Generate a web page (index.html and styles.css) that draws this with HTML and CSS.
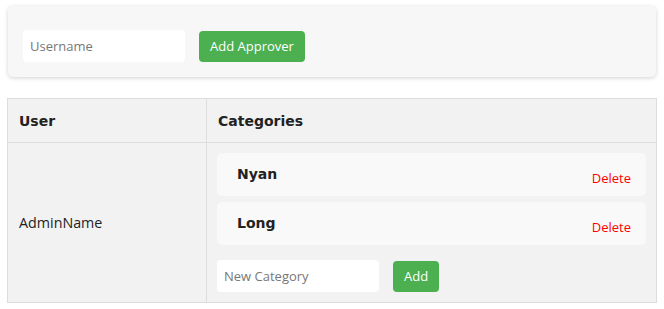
FILE: index.html
```html
<!DOCTYPE html>
<html>
<head>
<meta charset="utf-8">
<link rel="stylesheet" href="styles.css">
</head>
<body>
<div class="page">
  <div class="card">
    <form class="approver-form">
      <input class="text-input" type="text" placeholder="Username">
      <button class="btn" type="button">Add Approver</button>
    </form>
  </div>
  <table class="approvers">
    <thead>
      <tr>
        <th class="col-user">User</th>
        <th>Categories</th>
      </tr>
    </thead>
    <tbody>
      <tr>
        <td class="user-cell">AdminName</td>
        <td class="cat-cell">
          <div class="cat-list">
            <div class="cat-item"><span class="cat-name">Nyan</span><a class="delete">Delete</a></div>
            <div class="cat-item"><span class="cat-name">Long</span><a class="delete">Delete</a></div>
          </div>
          <div class="cat-form">
            <input class="text-input" type="text" placeholder="New Category">
            <button class="btn" type="button">Add</button>
          </div>
        </td>
      </tr>
    </tbody>
  </table>
</div>
</body>
</html>
```
FILE: styles.css
```css
html, body {
  margin: 0;
  padding: 0;
  background: #fff;
}
.page {
  padding: 6px 7px 0;
  font-family: "Open Sans", sans-serif;
  color: #222;
}
.card {
  margin: 0 1px;
  background: #f7f7f7;
  border-radius: 5px;
  box-shadow: 0 1px 4px rgba(0,0,0,0.18);
  padding: 24px 15px 15px;
}
.approver-form, .cat-form {
  display: flex;
  align-items: center;
  gap: 14px;
}
.text-input {
  box-sizing: border-box;
  width: 162px;
  height: 32px;
  border: none;
  border-radius: 4px;
  background: #fff;
  padding: 0 7px;
  font-family: "Open Sans", sans-serif;
  font-size: 13px;
  color: #333;
  outline: none;
}
.text-input::placeholder {
  color: #777;
}
.btn {
  box-sizing: border-box;
  height: 31px;
  border: none;
  border-radius: 4px;
  background: #4caf50;
  color: #fff;
  padding: 0 11px;
  font-family: "Open Sans", sans-serif;
  font-size: 13px;
}
.approvers {
  margin-top: 21px;
  width: 100%;
  border-collapse: collapse;
  background: #f2f2f2;
}
.approvers th, .approvers td {
  border: 1px solid #ddd;
  text-align: left;
}
.approvers th {
  font-family: "DejaVu Sans", sans-serif;
  font-weight: bold;
  font-size: 14px;
  height: 44px;
  padding: 0 11px;
  box-sizing: border-box;
  color: #222;
}
.col-user {
  width: 199px;
}
.user-cell {
  padding: 0 11px;
  font-size: 14.3px;
  color: #222;
  vertical-align: middle;
}
.cat-cell {
  padding: 10px 10px 10px;
}
.cat-list {
  display: flex;
  flex-direction: column;
  gap: 6px;
  margin-bottom: 15px;
}
.cat-item {
  display: flex;
  align-items: center;
  justify-content: space-between;
  height: 43px;
  padding: 0 15px 0 20px;
  background: #f9f9f9;
  border-radius: 5px;
}
.cat-name {
  font-family: "DejaVu Sans", sans-serif;
  font-weight: bold;
  font-size: 14px;
  color: #222;
  margin-top: -2px;
}
.delete {
  color: #ff0000;
  font-size: 13px;
  margin-top: 6px;
  cursor: pointer;
}
```
